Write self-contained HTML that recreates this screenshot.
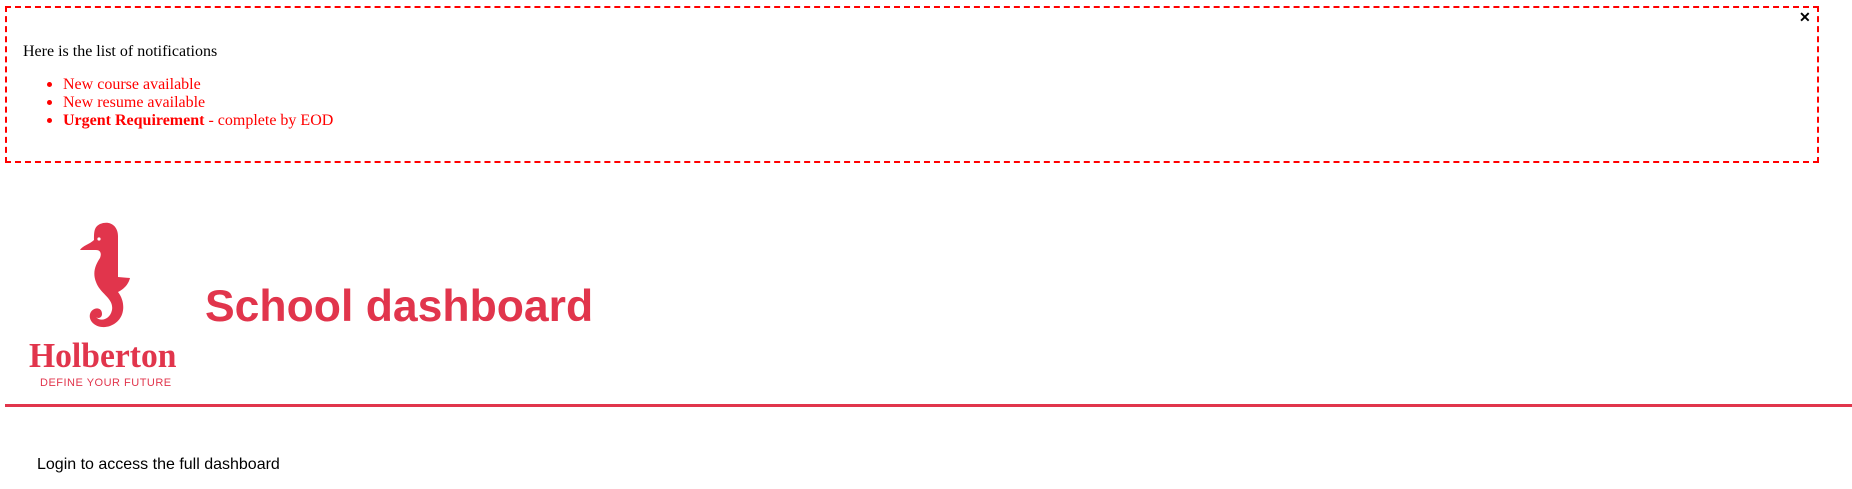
<!DOCTYPE html>
<html><head><meta charset="utf-8"><style>
html,body{margin:0;padding:0;background:#fff;width:1852px;height:489px;overflow:hidden;position:relative}
.box{position:absolute;left:5px;top:6px;width:1810px;height:153px;border:2px dashed #f00}
.t{position:absolute;font-family:"Liberation Serif",serif;font-size:16px;white-space:nowrap;line-height:18px}
.x{position:absolute;left:1799px;top:9px;font-family:"Liberation Sans",sans-serif;font-weight:bold;font-size:14px}
.dot{position:absolute;width:5px;height:5px;border-radius:50%;background:#f00}
.title{position:absolute;left:205px;top:281px;font-family:"Liberation Sans",sans-serif;font-weight:bold;font-size:44.5px;color:#e1354c;white-space:nowrap;line-height:52px}
.hol{position:absolute;left:29px;top:336px;font-family:"Liberation Serif",serif;font-weight:bold;font-size:35px;color:#e1354c;letter-spacing:0;line-height:40px;white-space:nowrap;transform-origin:0 0;transform:scaleX(0.96)}
.tag{position:absolute;left:40px;top:377px;font-family:"Liberation Sans",sans-serif;font-size:11px;color:#e1354c;letter-spacing:.5px;white-space:nowrap;line-height:13px}
.line{position:absolute;left:5px;top:404px;width:1847px;height:3px;background:#e1354c}
.login{position:absolute;left:37px;top:456px;font-family:"Liberation Sans",sans-serif;font-size:16px;white-space:nowrap;line-height:18px}
</style></head><body>
<div class="box"></div>
<div class="x">✕</div>
<div class="t" style="left:23px;top:43px">Here is the list of notifications</div>
<div class="dot" style="left:47px;top:82px"></div>
<div class="dot" style="left:47px;top:100px"></div>
<div class="dot" style="left:47px;top:118px"></div>
<div class="t" style="left:63px;top:76px;color:#f00">New course available</div>
<div class="t" style="left:63px;top:94px;color:#f00">New resume available</div>
<div class="t" style="left:63px;top:112px;color:#f00"><b>Urgent Requirement</b> - complete by EOD</div>
<svg style="position:absolute;left:80px;top:222px" width="52" height="108" viewBox="0 0 52 108">
<path fill="#e1354c" d="M20,2 C30,-2 38,4 38,14 L38,55 L50,56 C48,64 42,68 38,70 C46,80 46,98 30,104 C18,108 8,100 10,92 C12,85 22,84 22,92 C22,96 18,97 16,95 C20,100 30,98 32,88 C34,76 20,72 16,60 C12,50 16,42 20,36 C22,31 20,28 16,28 L0,28 C2,24 10,22 14,18 C14,10 14,5 20,2 Z"/>
<circle cx="19" cy="17" r="1.6" fill="#fff"/>
</svg>
<div class="hol">Holberton</div>
<div class="tag">DEFINE YOUR FUTURE</div>
<div class="title">School dashboard</div>
<div class="line"></div>
<div class="login">Login to access the full dashboard</div>
</body></html>
